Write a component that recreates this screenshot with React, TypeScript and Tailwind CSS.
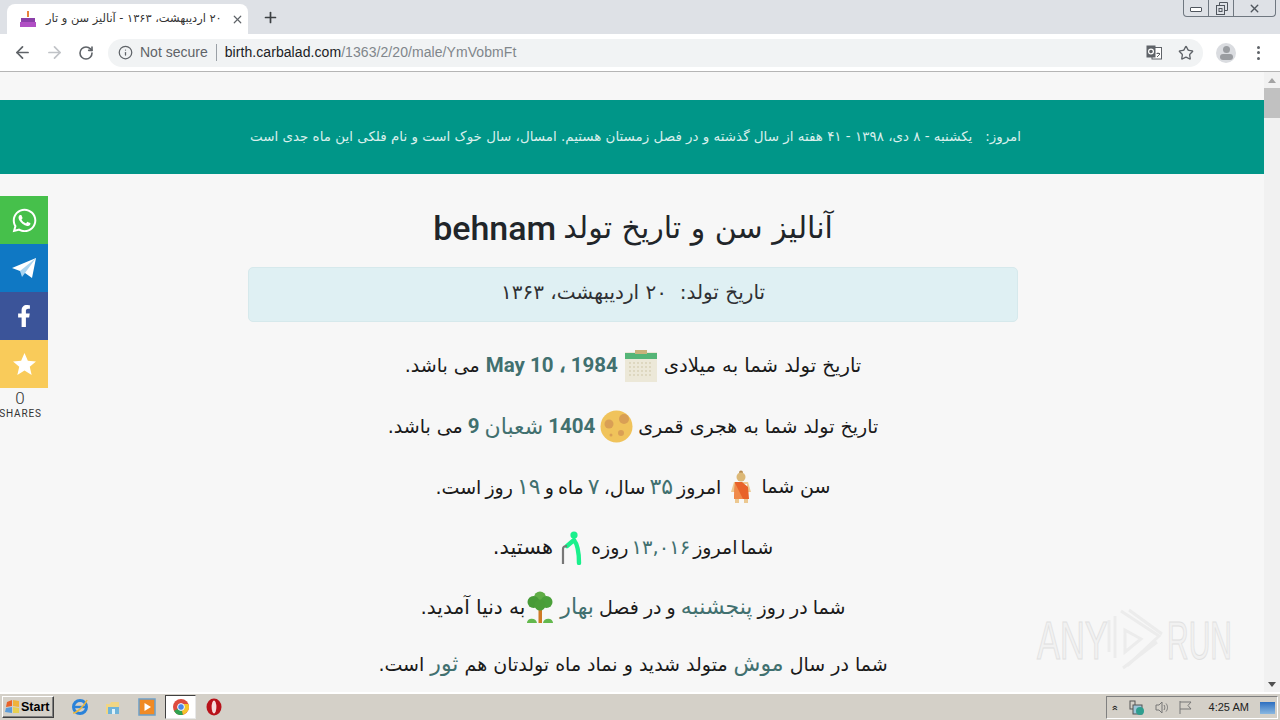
import { ArrowLeft, ArrowRight, Info, Plus, RotateCw, Star, X } from 'lucide-react';
import { FaFacebookF, FaWhatsapp } from 'react-icons/fa';
import type { ReactNode } from 'react';

const faFont = "font-['DejaVu_Sans','Noto_Sans',sans-serif]";

function Hi({ children, bold }: { children: ReactNode; bold?: boolean }) {
  return (
    <span className={bold ? "font-['Roboto',sans-serif] font-bold text-[#41706f] text-[20.5px]" : 'text-[#41706f] text-[22px]'}>
      {children}
    </span>
  );
}

function Line({ children, className }: { children: ReactNode; className: string }) {
  return (
    <p className={`flex items-center justify-center gap-[5px] h-[37px] whitespace-pre text-[19px] text-[#1a1a1a] ${className}`}>
      {children}
    </p>
  );
}

function CalendarIcon() {
  return (
    <svg width="34" height="34" viewBox="0 0 34 34" className="shrink-0">
      <rect x="1" y="3" width="32" height="30" fill="#ece8d8" />
      <rect x="1" y="4" width="32" height="6" fill="#55b577" />
      <rect x="11" y="1" width="12" height="4" fill="#c9b27a" />
      {[14, 18, 22, 26].map((y) => (
        <path key={y} d={`M5 ${y}H29`} stroke="#cfc7a8" strokeWidth="1" strokeDasharray="2 2" />
      ))}
    </svg>
  );
}

function MoonIcon() {
  return (
    <svg width="33" height="33" viewBox="0 0 33 33" className="shrink-0">
      <circle cx="16.5" cy="16.5" r="16" fill="#f0c35b" />
      <circle cx="24" cy="9" r="5" fill="#d99f55" />
      <circle cx="9" cy="14" r="4.5" fill="#d99f55" />
      <circle cx="21" cy="23" r="3" fill="#d99f55" />
      <circle cx="11" cy="25" r="1.5" fill="#d99f55" />
    </svg>
  );
}

function ManIcon() {
  return (
    <svg width="24" height="34" viewBox="0 0 24 34" className="shrink-0 mx-[3px]">
      <circle cx="12" cy="2.5" r="2" fill="#b5894f" />
      <circle cx="12" cy="7" r="4.5" fill="#dcb877" />
      <path d="M5 12H19L22 22H18V14H6V22H2Z" fill="#ecc891" />
      <path d="M6 12H13L19 17L20 29H5Z" fill="#e8622a" />
      <path d="M6 13L14 29H5Z" fill="#f08a4a" />
      <rect x="6" y="29" width="4" height="4" fill="#ecc891" />
      <rect x="15" y="29" width="4" height="4" fill="#ecc891" />
    </svg>
  );
}

function CaneIcon() {
  return (
    <svg width="22" height="34" viewBox="0 0 22 34" className="shrink-0 mx-[3px]">
      <circle cx="13" cy="4" r="3.6" fill="#19f08c" />
      <path d="M13 9L6 15M13 9C17 14 18 22 18 32" fill="none" stroke="#19f08c" strokeWidth="4.4" strokeLinecap="round" />
      <path d="M2 33V18C2 16 4 15 6 15" fill="none" stroke="#777" strokeWidth="2.2" />
    </svg>
  );
}

function TreeIcon() {
  return (
    <svg width="30" height="32" viewBox="0 0 30 32" className="shrink-0 -ml-[5px]">
      <rect x="13.5" y="14" width="3.5" height="18" fill="#cf7a25" />
      <path d="M2 32C2 27 11 26 12 32ZM18 32C19 26 28 27 28 32Z" fill="#63b84d" />
      <circle cx="15" cy="6.5" r="6" fill="#5fad45" />
      <circle cx="8.5" cy="11" r="6" fill="#479a37" />
      <circle cx="21.5" cy="11" r="6" fill="#4aa03a" />
      <circle cx="15" cy="14" r="5.5" fill="#4a9d38" />
    </svg>
  );
}

function SocialRail() {
  const items = [
    { bg: 'bg-[#46c04b]', icon: <FaWhatsapp size={27} /> },
    {
      bg: 'bg-[#0f78c4]',
      icon: (
        <svg width="24" height="20" viewBox="0 0 24 20">
          <path d="M0 10L24 0L20 20L13 15L8 13Z" fill="#fff" />
          <path d="M8 13L24 0L13 15L10 19Z" fill="#a9d4f0" />
        </svg>
      ),
    },
    { bg: 'bg-[#3b5499]', icon: <FaFacebookF size={22} /> },
    {
      bg: 'bg-[#f9cb5a]',
      icon: (
        <svg width="23" height="22" viewBox="0 0 24 23" fill="#fff">
          <path d="M12 0L15.5 8.2L24 8.8L17.5 14.4L19.5 23L12 18.4L4.5 23L6.5 14.4L0 8.8L8.5 8.2Z" />
        </svg>
      ),
    },
  ];
  return (
    <div className="absolute left-0 top-[124px] w-[48px]">
      {items.map((item, i) => (
        <div key={i} className={`h-[48px] flex items-center justify-center text-white ${item.bg}`}>
          {item.icon}
        </div>
      ))}
      <div className="mt-[2px] text-center font-['Roboto',sans-serif] text-[#333] leading-none">
        <div className="text-[17px] h-[19px] font-light -ml-[8px]">0</div>
        <div className="text-[10px] tracking-[0.8px] -ml-[7px]">SHARES</div>
      </div>
    </div>
  );
}

function Scrollbar() {
  return (
    <div className="w-[16px] shrink-0 bg-[#f1f1f1] flex flex-col items-center">
      <div className="h-[16px] flex items-center justify-center">
        <div className="border-x-[4px] border-x-transparent border-b-[5px] border-b-[#a3a3a3]" />
      </div>
      <div className="w-[16px] h-[30px] bg-[#c1c1c1]" />
      <div className="flex-1" />
      <div className="h-[16px] flex items-center justify-center">
        <div className="border-x-[4px] border-x-transparent border-t-[5px] border-t-[#505050]" />
      </div>
    </div>
  );
}

function Watermark() {
  return (
    <div className="absolute right-[48px] bottom-[20px] h-[64px] flex items-center font-['Liberation_Sans',sans-serif] text-[53px] leading-none text-[#f1f1f1] [-webkit-text-stroke:1px_#e0e0e0]">
      <span className="block w-[67px] scale-x-[0.65] origin-left whitespace-nowrap">ANY</span>
      <svg width="57" height="64" viewBox="0 0 57 64" fill="none" stroke="#ececec" strokeWidth="3" className="mx-[3px]">
        <path d="M2 12V44" />
        <path d="M8 8V50" />
        <path d="M14 3L52 28L20 58" />
        <path d="M22 2L55 26" />
        <path d="M18 22V44L34 31Z" />
        <path d="M16 60L50 34" />
      </svg>
      <span className="block w-[65px] scale-x-[0.565] origin-left whitespace-nowrap">RUN</span>
    </div>
  );
}

function BrowserTop() {
  return (
    <>
      <div className="h-[34px] bg-[#dee1e6] relative flex items-end shrink-0">
        <div className="ml-[7px] w-[241px] h-[30px] bg-white rounded-t-[8px] flex items-center pl-[13px] pr-[10px]">
          <svg width="16" height="16" viewBox="0 0 16 16" className="shrink-0">
            <rect x="7" y="0" width="2" height="6" fill="#e8833a" />
            <rect x="1" y="7" width="14" height="4" fill="#8a3fa8" />
            <rect x="0" y="11" width="16" height="5" fill="#b04fc4" />
          </svg>
          <span className={`flex-1 ml-[10px] mr-[9px] whitespace-nowrap text-[11.4px] text-[#333] ${faFont}`} dir="rtl">
            ۲۰ اردیبهشت، ۱۳۶۳ - آنالیز سن و تار
          </span>
          <X size={13} strokeWidth={2.2} className="text-[#5f6368] shrink-0" />
        </div>
        <Plus size={17} strokeWidth={2.4} className="ml-[14px] mb-[8px] text-[#3c4043]" />
        <div className="absolute right-[4px] top-0 w-[93px] h-[17px] flex border border-t-0 border-[#6f7780] rounded-b-[4px] text-[#50565e]">
          <div className="w-[25px] flex items-center justify-center border-r border-[#6f7780]">
            <div className="w-[12px] h-[5px] mt-[3px] border border-[#50565e] rounded-[1px] bg-white" />
          </div>
          <div className="w-[25px] flex items-center justify-center border-r border-[#6f7780]">
            <svg width="13" height="13" viewBox="0 0 13 13" fill="none" stroke="#50565e">
              <path d="M4.5 3V.5H12.5V8.5H9.5" />
              <rect x="1.5" y="3.5" width="8" height="9" />
              <rect x="4" y="6.5" width="3" height="3" />
            </svg>
          </div>
          <div className="flex-1 flex items-center justify-center">
            <X size={13} strokeWidth={2.6} />
          </div>
        </div>
      </div>
      <div className="h-[38px] bg-white border-b border-[#b5b5b5] flex items-center shrink-0">
        <ArrowLeft size={19} strokeWidth={2.2} className="ml-[13px] text-[#5f6368]" />
        <ArrowRight size={19} strokeWidth={2.2} className="ml-[13px] text-[#c0c3c7]" />
        <RotateCw size={16} strokeWidth={2.4} className="ml-[14px] text-[#5f6368]" />
        <div className="ml-[14px] w-[1095px] h-[28px] rounded-full bg-[#f1f3f4] flex items-center font-['Liberation_Sans',sans-serif] text-[14px] pl-[10px] pr-[9px]">
          <Info size={15} strokeWidth={2} className="text-[#5f6368]" />
          <span className="ml-[7px] text-[#5f6368]">Not secure</span>
          <span className="mx-[8px] h-[17px] w-px bg-[#9aa0a6]" />
          <span className="text-[#202124] tracking-[0.07px]">birth.carbalad.com</span>
          <span className="text-[#80868b] tracking-[0.07px]">/1363/2/20/male/YmVobmFt</span>
          <div className="flex-1" />
          <svg width="16" height="16" viewBox="0 0 16 16" className="mr-[16px]">
            <rect x="6" y="2.5" width="9.5" height="11.5" fill="#fff" stroke="#5f6368" />
            <rect x="0.5" y="0.5" width="9" height="12" fill="#5f6368" />
            <circle cx="5" cy="6.5" r="2.4" fill="none" stroke="#fff" strokeWidth="1.2" />
            <path d="M10.5 8.5H14M12 7.5V9M11 12L14 9" stroke="#5f6368" fill="none" />
          </svg>
          <Star size={16} strokeWidth={2} className="text-[#5f6368]" />
        </div>
        <div className="ml-[13px] w-[20px] h-[20px] rounded-full bg-[#dadce0] flex flex-col items-center justify-center overflow-hidden">
          <div className="w-[7px] h-[7px] rounded-full bg-[#9a9da1]" />
          <div className="w-[13px] h-[6px] mt-[1px] rounded-full bg-[#9a9da1]" />
        </div>
        <div className="ml-[21px] flex flex-col gap-[2.5px]">
          <div className="w-[3px] h-[3px] rounded-full bg-[#5f6368]" />
          <div className="w-[3px] h-[3px] rounded-full bg-[#5f6368]" />
          <div className="w-[3px] h-[3px] rounded-full bg-[#5f6368]" />
        </div>
      </div>
    </>
  );
}

function Taskbar() {
  return (
    <div className="h-[28px] shrink-0 bg-[#d4d0c8] border-t-2 border-white flex items-center relative font-['Liberation_Sans',sans-serif]">
      <div className="ml-[2px] w-[52px] h-[22px] bg-[#d4d0c8] border border-t-white border-l-white border-r-[#404040] border-b-[#404040] shadow-[inset_-1px_-1px_0_#808080] flex items-center pl-[2px] gap-[1px]">
        <svg width="15" height="14" viewBox="0 0 15 14">
          <path d="M2 2L7 0V6L1 7Z" fill="#e8622a" />
          <path d="M8 0L14 1V7L8 6Z" fill="#f0b23a" />
          <path d="M1 8L7 7V13L0 12Z" fill="#5b9bd9" />
          <path d="M8 7L14 8V13L8 13Z" fill="#e8d050" />
        </svg>
        <span className="text-[12.5px] font-bold text-black leading-none">Start</span>
      </div>
      <svg width="18" height="18" viewBox="0 0 18 18" className="ml-[17px]">
        <circle cx="9" cy="9" r="6.5" fill="none" stroke="#2a82d9" strokeWidth="3" />
        <path d="M3 9H15" stroke="#2a82d9" strokeWidth="2.4" />
        <path d="M2 15C6 15 14 7 16 2" stroke="#e8b63a" strokeWidth="1.6" fill="none" />
      </svg>
      <svg width="18" height="18" viewBox="0 0 18 18" className="ml-[15px]">
        <path d="M2 6H6L7 4H15V16H2Z" fill="#f1d684" />
        <rect x="4" y="9" width="11" height="7" fill="#6fb3d9" />
        <rect x="8" y="11" width="3" height="5" fill="#dff1f8" />
      </svg>
      <svg width="18" height="18" viewBox="0 0 18 18" className="ml-[16px]">
        <rect x="1" y="1" width="16" height="16" fill="#f08a24" stroke="#6b9fc9" strokeWidth="1.5" />
        <path d="M6.5 5L13 9L6.5 13Z" fill="#fff" />
      </svg>
      <div className="ml-[9px] w-[31px] h-[24px] bg-white border border-t-[#404040] border-l-[#404040] border-r-[#e8e8e8] border-b-[#e8e8e8] flex items-center justify-center">
        <svg width="16" height="16" viewBox="0 0 16 16">
          <circle cx="8" cy="8" r="8" fill="#dd4b3e" />
          <path d="M8 8L1 12A8 8 0 0 0 10 15.7Z" fill="#2fa350" />
          <path d="M8 8L10 15.7A8 8 0 0 0 15.4 5H8Z" fill="#f6c42a" />
          <circle cx="8" cy="8" r="3.4" fill="#4a86e8" stroke="#fff" />
        </svg>
      </div>
      <svg width="16" height="18" viewBox="0 0 16 18" className="ml-[10px]">
        <ellipse cx="8" cy="9" rx="7.5" ry="8.5" fill="#b8121a" />
        <ellipse cx="8" cy="9" rx="2.4" ry="6.5" fill="#f6dcdc" />
      </svg>
      <div className="absolute right-[2px] top-[2px] w-[172px] h-[23px] border border-t-[#808080] border-l-[#808080] border-r-white border-b-white flex items-center text-[#222]">
        <span className="ml-[5px] text-[10px] font-bold leading-none -rotate-90">»</span>
        <svg width="16" height="16" viewBox="0 0 16 16" className="ml-[11px]">
          <rect x="1" y="1" width="5" height="8" fill="none" stroke="#555" />
          <rect x="4" y="5" width="9" height="9" fill="#9cc4d8" stroke="#555" />
          <circle cx="11" cy="11" r="4" fill="#2f9e8f" />
        </svg>
        <svg width="15" height="15" viewBox="0 0 15 15" fill="none" stroke="#777" className="ml-[9px]">
          <path d="M2 5H5L8 2V13L5 10H2Z" />
          <path d="M10 5C11 6.5 11 8.5 10 10M12 3.5C14 6 14 9 12 11.5" />
        </svg>
        <svg width="14" height="15" viewBox="0 0 14 15" fill="none" stroke="#777" className="ml-[9px]">
          <path d="M2 1V14" />
          <path d="M2 2H13L10 5.5L13 9H2" />
        </svg>
        <span className="ml-[17px] text-[11px] leading-none whitespace-nowrap">4:25 AM</span>
        <div className="ml-[11px] w-[15px] h-[12px] bg-gradient-to-b from-[#2c6fc0] to-[#8ab8e0]" />
      </div>
    </div>
  );
}

export default function App() {
  return (
    <div className="w-[1280px] h-[720px] flex flex-col overflow-hidden bg-[#f7f7f7]">
      <BrowserTop />
      <div className="flex-1 min-h-0 flex relative">
        <div className={`flex-1 min-w-0 overflow-hidden pt-[28px] ${faFont}`} dir="rtl">
          <div className="h-[74px] bg-[#009688] flex items-center justify-center text-[13.45px] text-[#d9efec] whitespace-pre pl-[7px]">
            امروز:   یکشنبه - ۸ دی، ۱۳۹۸ - ۴۱ هفته از سال گذشته و در فصل زمستان هستیم. امسال، سال خوک است و نام فلکی این ماه جدی است
          </div>
          <div className="pl-[2px]">
            <div className="w-[770px] mx-auto pt-[30px]">
              <h1 className="h-[48px] flex items-center justify-center text-[30px] font-normal text-[#212529] leading-none">
                آنالیز سن و تاریخ تولد <span className="font-['Roboto',sans-serif] font-medium mr-[7px] text-[34px]">behnam</span>
              </h1>
              <div className="mt-[15px] h-[55px] pb-[5px] bg-[#dff0f3] border border-[#d6e9ec] rounded-[5px] flex items-center justify-center text-[20px] text-[#2f3133] whitespace-pre">
                تاریخ تولد:  ۲۰ اردیبهشت، ۱۳۶۳
              </div>
              <div className="pt-[1px]">
                <Line className="mt-[24px] gap-[6px]">
                  <span className="text-[19.6px]">تاریخ تولد شما به میلادی</span>
                  <CalendarIcon />
                  <span dir="ltr"><Hi bold>May 10 ، 1984</Hi></span>
                  <span>می باشد.</span>
                </Line>
                <Line className="mt-[24px]">
                  <span>تاریخ تولد شما به هجری قمری</span>
                  <MoonIcon />
                  <Hi bold>1404</Hi>
                  <Hi>شعبان</Hi>
                  <Hi bold>9</Hi>
                  <span>می باشد.</span>
                </Line>
                <Line className="mt-[23px]">
                  <span>سن شما</span>
                  <ManIcon />
                  <span className="[word-spacing:-2px]">امروز <Hi>۳۵</Hi> سال، <Hi>۷</Hi> ماه و <Hi>۱۹</Hi> روز است.</span>
                </Line>
                <Line className="mt-[24px]">
                  <span className="[word-spacing:-3px]">شما امروز <span className="text-[#41706f] text-[19.5px]">۱۳,۰۱۶</span> روزه</span>
                  <CaneIcon />
                  <span className="text-[21px]">هستید.</span>
                </Line>
                <Line className="mt-[22px]">
                  <span className="[word-spacing:-1px]">شما در روز <Hi>پنجشنبه</Hi> و در فصل <Hi>بهار</Hi></span>
                  <TreeIcon />
                  <span className="text-[20px]">به دنیا آمدید.</span>
                </Line>
                <Line className="mt-[20px]">
                  <span>شما در سال <Hi>موش</Hi> متولد شدید و نماد ماه تولدتان هم <Hi>ثور</Hi> است.</span>
                </Line>
              </div>
            </div>
          </div>
        </div>
        <Scrollbar />
        <SocialRail />
        <Watermark />
      </div>
      <Taskbar />
    </div>
  );
}
